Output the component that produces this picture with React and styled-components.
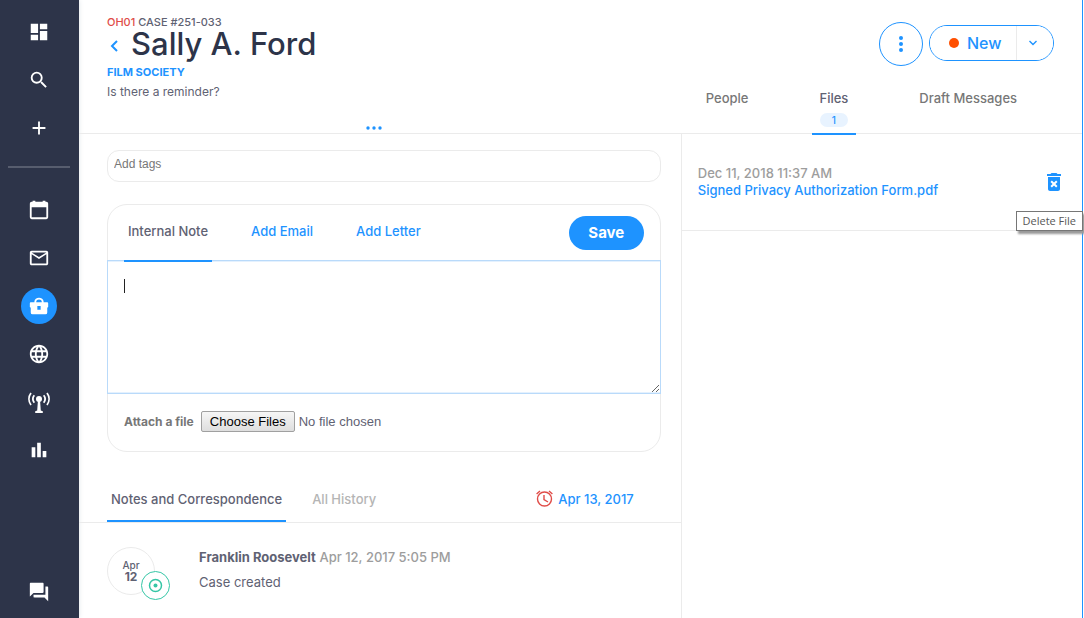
import React from "react";
import styled, { createGlobalStyle, css } from "styled-components";
import {
  MdDashboard,
  MdSearch,
  MdAdd,
  MdMailOutline,
  MdLanguage,
  MdBarChart,
  MdForum,
  MdDeleteForever,
} from "react-icons/md";

const c = {
  navy: "#2d3449",
  blue: "#1e93ff",
  text: "#5f6273",
  muted: "#9d9d9d",
  line: "#ebebeb",
  red: "#e04c48",
  green: "#35c6a6",
};

const GlobalStyle = createGlobalStyle`
  *, *::before, *::after { box-sizing: border-box; }
  body {
    margin: 0;
    background: #fff;
    color: ${c.text};
    font-family: Inter, "Liberation Sans", sans-serif;
    font-size: 13px;
    line-height: 16px;
  }
  button { font: inherit; cursor: pointer; }
  a { color: ${c.blue}; text-decoration: none; }
  h1, p { margin: 0; }
`;

const Page = styled.div`
  display: flex;
  min-height: 100vh;
`;

const Sidebar = styled.nav`
  display: flex;
  flex-direction: column;
  align-items: center;
  gap: 12px;
  width: 79px;
  flex: none;
  padding: 14px 1px 8px 0;
  background: ${c.navy};
  box-shadow: 0 0 5px #dfe5e8;
`;

const NavLink = styled.a`
  display: flex;
  align-items: center;
  justify-content: center;
  width: 36px;
  height: 36px;
  border-radius: 50%;
  color: #fff;
  background: ${(p) => (p.$active ? c.blue : "transparent")};
  ${(p) => p.$last && css`margin-top: auto;`}
`;

const NavRule = styled.hr`
  width: 62px;
  height: 2px;
  margin: 8px 0 12px;
  border: 0;
  background: #575d6e;
`;

const Main = styled.main`
  display: flex;
  flex: 1;
  min-width: 0;
  flex-direction: column;
  margin-right: 1px;
  border-right: 1px solid ${c.blue};
`;

const Header = styled.header`
  display: grid;
  grid-template-columns: 3fr 2fr;
  height: 134px;
  border-bottom: 1px solid ${c.line};
`;

const CaseSummary = styled.div`
  display: flex;
  flex-direction: column;
  padding: 15px 40px 0 28px;
`;

const CaseNumber = styled.p`
  font-size: 11px;
  font-weight: 500;
  line-height: 14px;
`;

const Office = styled.span`
  color: ${c.red};
`;

const NameRow = styled.div`
  display: flex;
  align-items: center;
  gap: 10px;
  height: 36px;
  padding: 0 0 6px 2px;
`;

const BackLink = styled.a`
  display: flex;
  padding-top: 4px;
`;

const Name = styled.h1`
  color: ${c.navy};
  font-size: 31px;
  font-weight: 500;
  line-height: 30px;
`;

const Category = styled.a`
  font-size: 11px;
  font-weight: 700;
  line-height: 14px;
`;

const Reminder = styled.p`
  margin-top: 5px;
  font-size: 12px;
`;

const MoreButton = styled.button`
  display: flex;
  align-self: center;
  margin: auto 0 3px;
  padding: 0;
  border: 0;
  background: none;
`;

const HeaderSide = styled.div`
  display: flex;
  flex-direction: column;
  justify-content: space-between;
  padding: 22px 28px 0 17px;
`;

const Actions = styled.div`
  display: flex;
  align-items: center;
  justify-content: flex-end;
  gap: 6px;
`;

const MenuButton = styled.button`
  display: flex;
  align-items: center;
  justify-content: center;
  width: 44px;
  height: 44px;
  padding: 0;
  border: 1px solid ${c.blue};
  border-radius: 50%;
  background: #fff;
`;

const SplitButton = styled.div`
  display: flex;
  height: 36px;
  margin-bottom: 2px;
  border: 1px solid ${c.blue};
  border-radius: 18px;
  overflow: hidden;
`;

const StatusButton = styled.button`
  display: flex;
  align-items: center;
  gap: 8px;
  width: 87px;
  padding: 0 0 1px 19px;
  border: 0;
  border-right: 1px solid ${c.line};
  background: #fff;
  color: ${c.blue};
  font-size: 16px;
  font-weight: 500;
`;

const StatusDot = styled.span`
  width: 10px;
  height: 10px;
  border-radius: 50%;
  background: #ff4f00;
`;

const StatusMenu = styled.button`
  display: flex;
  align-items: center;
  justify-content: center;
  width: 36px;
  padding: 0 4px 0 0;
  border: 0;
  background: #fff;
`;

const SideTabs = styled.div`
  display: flex;
  gap: 55px;
  margin-bottom: -2px;
`;

const SideTab = styled.button`
  display: flex;
  flex-direction: column;
  align-items: center;
  gap: 7px;
  height: 45px;
  padding: 0 8px;
  border: 0;
  border-bottom: 2px solid ${(p) => (p.$active ? c.blue : "transparent")};
  background: none;
  color: ${(p) => (p.$active ? c.text : "#777")};
  font-weight: 500;
  white-space: nowrap;
`;

const Count = styled.span`
  width: 28px;
  border-radius: 7px;
  background: #e8f3ff;
  color: ${c.blue};
  font-size: 10px;
  line-height: 14px;
`;

const Body = styled.div`
  display: grid;
  flex: 1;
  grid-template-columns: 3fr 2fr;
`;

const CasePane = styled.section`
  display: flex;
  flex-direction: column;
  padding-top: 16px;
`;

const TagsInput = styled.input`
  height: 32px;
  margin: 0 20px 0 28px;
  padding: 0 6px 4px;
  border: 1px solid ${c.line};
  border-radius: 12px;
  font: 12px "Liberation Sans", Arial, sans-serif;
  &::placeholder { color: #777; }
`;

const Composer = styled.form`
  margin: 22px 20px 0 28px;
  border: 1px solid ${c.line};
  border-radius: 20px;
`;

const ComposerTop = styled.div`
  display: flex;
  align-items: center;
  justify-content: space-between;
  height: 55px;
  padding: 0 16px;
`;

const TabRow = styled.div`
  display: flex;
  gap: ${(p) => p.$gap}px;
  align-self: stretch;
`;

const Tab = styled.button`
  position: relative;
  padding: 0 4px ${(p) => (p.$overlap ? 3 : 0)}px;
  border: 0;
  background: none;
  color: ${(p) => p.$color};
  font-weight: 500;
  white-space: nowrap;
  ${(p) =>
    p.$active &&
    css`
      &::after {
        content: "";
        position: absolute;
        z-index: 1;
        left: 0;
        right: 0;
        bottom: ${p.$overlap ? -2 : 0}px;
        height: 2px;
        background: ${c.blue};
      }
    `}
`;

const SaveButton = styled.button`
  width: 75px;
  height: 34px;
  padding: 0;
  border: 0;
  border-radius: 17px;
  background: ${c.blue};
  color: #fff;
  font-size: 15px;
  font-weight: 700;
`;

const NoteField = styled.div`
  position: relative;
  margin: 0 -1px;
`;

const NoteArea = styled.textarea`
  display: block;
  width: 100%;
  height: 134px;
  padding: 16px;
  border: 1px solid #b9dafa;
  outline: none;
  resize: vertical;
  font: inherit;
  box-shadow: inset 0 1px #e4f1fe, inset 0 -1px #e4f1fe;
`;

const Caret = styled.span`
  position: absolute;
  top: 19px;
  left: 17px;
  width: 1px;
  height: 14px;
  background: #222;
`;

const AttachRow = styled.div`
  display: flex;
  align-items: center;
  gap: 7px;
  height: 57px;
  padding: 0 16px 2px;
`;

const AttachLabel = styled.label`
  color: #777;
  font-size: 12px;
  font-weight: 700;
  white-space: nowrap;
`;

const FileInput = styled.input`
  flex: 1;
  min-width: 0;
  color: ${c.text};
  font: 13px "Liberation Sans", Arial, sans-serif;
  &::file-selector-button {
    width: 94px;
    height: 21px;
    margin: 0 4px 0 0;
    padding: 0;
    border: 1px solid #a0a0a0;
    border-radius: 2px;
    background: linear-gradient(#f6f6f6, #dedede);
    color: #000;
    font: 13px "Liberation Sans", Arial, sans-serif;
  }
`;

const HistoryBar = styled.div`
  display: flex;
  align-items: center;
  justify-content: space-between;
  height: 48px;
  margin-top: 23px;
  padding: 0 47px 0 28px;
  border-bottom: 1px solid ${c.line};
`;

const DueLink = styled.a`
  display: flex;
  align-items: center;
  gap: 5px;
  font-weight: 500;
`;

const Entry = styled.article`
  display: flex;
  gap: 44px;
  padding: 24px 21px 18px 28px;
`;

const DateDisc = styled.div`
  position: relative;
  width: 48px;
  height: 48px;
  flex: none;
  padding-top: 12px;
  border: 1px solid ${c.line};
  border-radius: 50%;
  font-size: 10px;
  font-weight: 500;
  line-height: 11px;
  text-align: center;
`;

const Day = styled.strong`
  display: block;
  font-size: 12px;
`;

const EntryKind = styled.svg`
  position: absolute;
  left: 33px;
  top: 23px;
`;

const EntryText = styled.div`
  display: flex;
  flex-direction: column;
  gap: 9px;
  padding-top: 2px;
`;

const Author = styled.strong`
  font-weight: 700;
`;

const Stamp = styled.time`
  color: ${c.muted};
  font-weight: 500;
`;

const FilesPane = styled.aside`
  border-left: 1px solid ${c.line};
`;

const FileRow = styled.div`
  display: flex;
  align-items: center;
  justify-content: space-between;
  height: 97px;
  padding: 0 16px;
  border-bottom: 1px solid ${c.line};
`;

const FileText = styled.div`
  display: flex;
  flex-direction: column;
  font-weight: 500;
  line-height: 17px;
`;

const DeleteButton = styled.button`
  position: relative;
  display: flex;
  padding: 0;
  border: 0;
  background: none;
  color: ${c.blue};
`;

const Tooltip = styled.span`
  position: absolute;
  top: 41px;
  right: -17px;
  padding: 1px 6px;
  border: 1px solid #767676;
  background: #fff;
  box-shadow: 2px 3px 2px #999;
  color: #575757;
  font-family: "Open Sans", "Noto Sans", sans-serif;
  font-size: 11px;
  line-height: 16px;
  white-space: nowrap;
`;

const CalendarIcon = () => (
  <svg width="22" height="22" viewBox="0 0 24 24" fill="currentColor" aria-hidden="true">
    <path fillRule="evenodd" d="M4 3h1V2h3v1h8V2h3v1h1a2 2 0 0 1 2 2v15a2 2 0 0 1-2 2H4a2 2 0 0 1-2-2V5a2 2 0 0 1 2-2zm0 6v11h16V9z" />
  </svg>
);

const CaseIcon = () => (
  <svg width="22" height="22" viewBox="0 0 24 24" fill="currentColor" aria-hidden="true">
    <path fillRule="evenodd" d="M3 8h18a1 1 0 0 1 1 1v4l-1 1v5a2 2 0 0 1-2 2H5a2 2 0 0 1-2-2v-5l-1-1V9a1 1 0 0 1 1-1zm7.2 4v4h3.6v-4z" />
    <path d="M8 9V7a4 3 0 0 1 8 0v2" fill="none" stroke="currentColor" strokeWidth="2" />
  </svg>
);

const TowerIcon = () => (
  <svg width="24" height="24" viewBox="0 0 24 24" fill="currentColor" aria-hidden="true">
    <circle cx="12" cy="9" r="3" />
    <path d="M10.9 11h2.2l.7 9.6 2 .7V23H8.200v-1.700l2-.7z" />
    <path
      d="M7.300 5.300a6 6 0 0 0 0 7.400M16.700 5.300a6 6 0 0 1 0 7.400M4 3a10 10 0 0 0 0 12M20 3a10 10 0 0 1 0 12"
      fill="none"
      stroke="currentColor"
      strokeWidth="1.800"
    />
  </svg>
);

const AlarmIcon = () => (
  <svg width="17" height="17" viewBox="0 0 17 17" fill="none" stroke={c.red} strokeWidth="1.400" aria-hidden="true">
    <circle cx="8.500" cy="9" r="7" />
    <path d="M.6 4 4 1M16.400 4 13 1M8 5v4.500l4 2.500" />
  </svg>
);

const Dots = ({ vertical }) => (
  <svg width={vertical ? 4 : 16} height={vertical ? 16 : 4} fill={c.blue} aria-hidden="true">
    {[2, 8, 14].map((n) => (
      <circle key={n} cx={vertical ? 2 : n} cy={vertical ? n : 2} r={vertical ? 2 : 1.7} />
    ))}
  </svg>
);

export default function App() {
  return (
    <>
      <GlobalStyle />
      <Page>
        <Sidebar aria-label="Main">
          <NavLink href="#dashboard" aria-label="Dashboard"><MdDashboard size={22} /></NavLink>
          <NavLink href="#search" aria-label="Search"><MdSearch size={22} /></NavLink>
          <NavLink href="#add" aria-label="Add"><MdAdd size={22} /></NavLink>
          <NavRule />
          <NavLink href="#calendar" aria-label="Calendar"><CalendarIcon /></NavLink>
          <NavLink href="#mail" aria-label="Mail"><MdMailOutline size={22} /></NavLink>
          <NavLink href="#cases" aria-label="Cases" $active><CaseIcon /></NavLink>
          <NavLink href="#web" aria-label="Web"><MdLanguage size={22} /></NavLink>
          <NavLink href="#outreach" aria-label="Outreach"><TowerIcon /></NavLink>
          <NavLink href="#reports" aria-label="Reports"><MdBarChart size={22} /></NavLink>
          <NavLink href="#chat" aria-label="Chat" $last><MdForum size={22} /></NavLink>
        </Sidebar>

        <Main>
          <Header>
            <CaseSummary>
              <CaseNumber><Office>OH01</Office> CASE #251-033</CaseNumber>
              <NameRow>
                <BackLink href="#back" aria-label="Back">
                  <svg width="12" height="12" fill="none" stroke={c.blue} strokeWidth="2" aria-hidden="true">
                    <path d="M8 1 3 6l5 5" />
                  </svg>
                </BackLink>
                <Name>Sally A. Ford</Name>
              </NameRow>
              <Category href="#film-society">FILM SOCIETY</Category>
              <Reminder>Is there a reminder?</Reminder>
              <MoreButton aria-label="Show more"><Dots /></MoreButton>
            </CaseSummary>
            <HeaderSide>
              <Actions>
                <MenuButton aria-label="Case menu"><Dots vertical /></MenuButton>
                <SplitButton>
                  <StatusButton><StatusDot />New</StatusButton>
                  <StatusMenu aria-label="Change status">
                    <svg width="10" height="6" fill="none" stroke={c.blue} strokeWidth="1.400" aria-hidden="true">
                      <path d="m1.500 1 3.500 3.500L8.500 1" />
                    </svg>
                  </StatusMenu>
                </SplitButton>
              </Actions>
              <SideTabs>
                <SideTab>People</SideTab>
                <SideTab $active>Files<Count>1</Count></SideTab>
                <SideTab>Draft Messages</SideTab>
              </SideTabs>
            </HeaderSide>
          </Header>

          <Body>
            <CasePane>
              <TagsInput aria-label="Tags" placeholder="Add tags" />
              <Composer onSubmit={(e) => e.preventDefault()}>
                <ComposerTop>
                  <TabRow $gap={35}>
                    <Tab type="button" $active $overlap $color={c.text}>Internal Note</Tab>
                    <Tab type="button" $overlap $color={c.blue}>Add Email</Tab>
                    <Tab type="button" $overlap $color={c.blue}>Add Letter</Tab>
                  </TabRow>
                  <SaveButton type="submit">Save</SaveButton>
                </ComposerTop>
                <NoteField>
                  <NoteArea aria-label="Internal note" />
                  <Caret aria-hidden="true" />
                </NoteField>
                <AttachRow>
                  <AttachLabel htmlFor="attachment">Attach a file</AttachLabel>
                  <FileInput id="attachment" type="file" multiple />
                </AttachRow>
              </Composer>

              <HistoryBar>
                <TabRow $gap={22}>
                  <Tab $active $color={c.text}>Notes and Correspondence</Tab>
                  <Tab $color="#b5b5b5">All History</Tab>
                </TabRow>
                <DueLink href="#due"><AlarmIcon />Apr 13, 2017</DueLink>
              </HistoryBar>

              <Entry>
                <DateDisc>
                  Apr<Day>12</Day>
                  <EntryKind width="29" height="29" fill="none" stroke={c.green} aria-hidden="true">
                    <circle cx="14.500" cy="14.500" r="14" fill="#fff" />
                    <circle cx="14.500" cy="14.500" r="6" strokeWidth="1.500" />
                    <circle cx="14.500" cy="14.500" r="2" fill={c.green} stroke="none" />
                  </EntryKind>
                </DateDisc>
                <EntryText>
                  <p><Author>Franklin Roosevelt</Author> <Stamp>Apr 12, 2017 5:05 PM</Stamp></p>
                  <p>Case created</p>
                </EntryText>
              </Entry>
            </CasePane>

            <FilesPane>
              <FileRow>
                <FileText>
                  <Stamp>Dec 11, 2018 11:37 AM</Stamp>
                  <a href="#file">Signed Privacy Authorization Form.pdf</a>
                </FileText>
                <DeleteButton aria-label="Delete File">
                  <MdDeleteForever size={24} />
                  <Tooltip role="tooltip">Delete File</Tooltip>
                </DeleteButton>
              </FileRow>
            </FilesPane>
          </Body>
        </Main>
      </Page>
    </>
  );
}
